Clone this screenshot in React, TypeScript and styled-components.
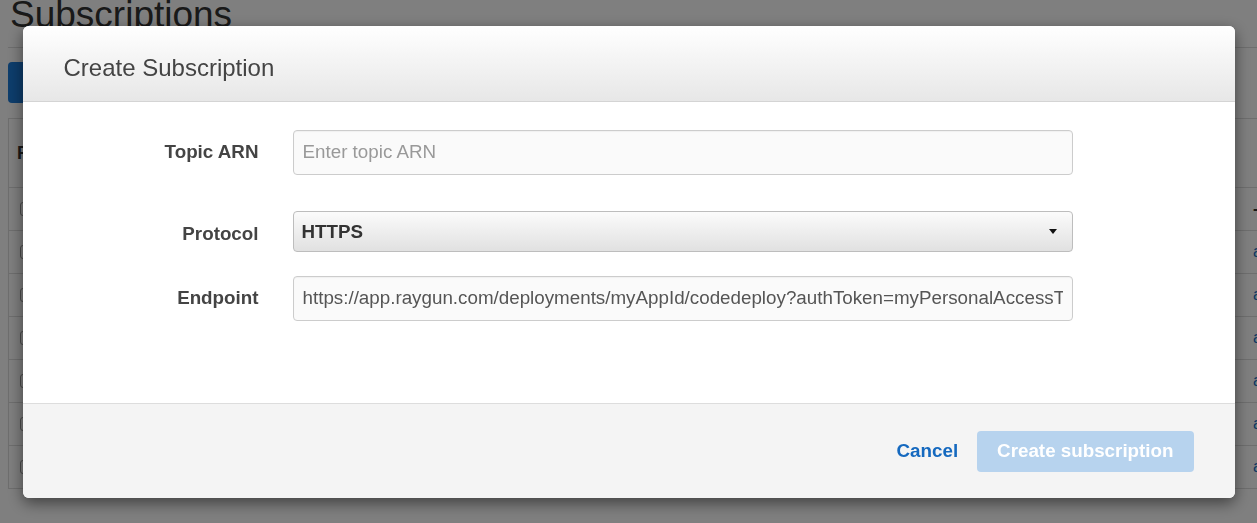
import styled, { createGlobalStyle } from 'styled-components'

const rows = ['-', 'arn', 'arn', 'arn', 'arn', 'arn', 'arn']

export default function App() {
  return (
    <>
      <GlobalStyle />
      <Page aria-hidden="true">
        <PageTitle>Subscriptions</PageTitle>
        <Rule />
        <ToolbarButton>Create subscription</ToolbarButton>
        <Table>
          <HeadRow>
            <HeadCell>Filter</HeadCell>
            <HeadCell />
          </HeadRow>
          {rows.map((value, i) => (
            <BodyRow key={i}>
              <Cell>
                <Check />
              </Cell>
              <Cell>{value === '-' ? <Dash>-</Dash> : <TableLink>arn:aws:sns</TableLink>}</Cell>
            </BodyRow>
          ))}
        </Table>
      </Page>

      <Overlay>
        <Modal role="dialog" aria-labelledby="create-subscription-title">
          <ModalHeader>
            <ModalTitle id="create-subscription-title">Create Subscription</ModalTitle>
          </ModalHeader>

          <ModalBody>
            <Field $top={28}>
              <Label htmlFor="topic-arn">Topic ARN</Label>
              <TextInput id="topic-arn" placeholder="Enter topic ARN" />
            </Field>

            <Field $top={36}>
              <Label htmlFor="protocol" $shift={3}>
                Protocol
              </Label>
              <SelectWrap>
                <Select id="protocol" defaultValue="HTTPS">
                  <option>HTTP</option>
                  <option>HTTPS</option>
                  <option>Email</option>
                  <option>SMS</option>
                </Select>
                <Caret viewBox="0 0 8 5" aria-hidden="true">
                  <path d="M0 0h8L4 5z" />
                </Caret>
              </SelectWrap>
            </Field>

            <Field $top={24}>
              <Label htmlFor="endpoint">Endpoint</Label>
              <TextInput
                id="endpoint"
                defaultValue="https://app.raygun.com/deployments/myAppId/codedeploy?authToken=myPersonalAccessToken"
              />
            </Field>
          </ModalBody>

          <ModalFooter>
            <CancelLink href="#">Cancel</CancelLink>
            <PrimaryButton disabled>Create subscription</PrimaryButton>
          </ModalFooter>
        </Modal>
      </Overlay>
    </>
  )
}

const GlobalStyle = createGlobalStyle`
  html,
  body {
    margin: 0;
    padding: 0;
  }

  body {
    font-family: "Liberation Sans", Arial, Helvetica, sans-serif;
    background: #fff;
    color: #333;
    overflow: hidden;
  }

  *,
  *::before,
  *::after {
    box-sizing: border-box;
  }
`

/* page behind the dialog */

const Page = styled.div`
  width: 1257px;
  height: 523px;
  overflow: hidden;
  padding-left: 8px;
`

const PageTitle = styled.h1`
  margin: -3px 0 0 2px;
  font-size: 37px;
  line-height: 36px;
  font-weight: 400;
  color: #333;
`

const Rule = styled.div`
  margin-top: 14px;
  border-top: 1px solid #ddd;
`

const ToolbarButton = styled.button`
  display: block;
  margin-top: 14px;
  width: 160px;
  height: 41px;
  border: 0;
  border-radius: 4px;
  background: #1b7bd9;
  color: #fff;
  font: 700 18px "Liberation Sans", Arial, sans-serif;
`

const Table = styled.div`
  margin-top: 15px;
  width: 1400px;
  border: 1px solid #ddd;
  border-right: 0;
  border-bottom: 0;
  background: #fff;
`

const HeadRow = styled.div`
  display: grid;
  grid-template-columns: 1236px 1fr;
  align-items: center;
  height: 69px;
  border-bottom: 1px solid #ddd;
`

const BodyRow = styled.div`
  display: grid;
  grid-template-columns: 1236px 1fr;
  align-items: center;
  height: 43px;
  border-bottom: 1px solid #ddd;
`

const HeadCell = styled.div`
  padding: 0 8px;
  font-size: 18px;
  font-weight: 700;
  color: #333;
  white-space: nowrap;
`

const Cell = styled.div`
  padding: 0 8px 0 11px;
  font-size: 16px;
  white-space: nowrap;
`

const Check = styled.span`
  display: block;
  width: 14px;
  height: 14px;
  border: 1px solid #999;
  border-radius: 3px;
  background: #fff;
`

const Dash = styled.span`
  margin-left: -3px;
  font-weight: 700;
  color: #333;
`

const TableLink = styled.span`
  margin-left: -3px;
  color: #1a6fc4;
`

/* dialog */

const Overlay = styled.div`
  position: fixed;
  inset: 0;
  display: flex;
  align-items: center;
  justify-content: center;
  background: rgba(0, 0, 0, 0.5);
`

const Modal = styled.section`
  width: 1212px;
  border-radius: 6px;
  overflow: hidden;
  background: #fff;
  box-shadow: 0 5px 15px rgba(0, 0, 0, 0.5);
`

const ModalHeader = styled.header`
  height: 76px;
  padding: 27px 41px 0;
  border-bottom: 1px solid #d4d4d4;
  background: linear-gradient(to bottom, #ffffff 0%, #e7e7e7 100%);
`

const ModalTitle = styled.h2`
  margin: 0;
  font-size: 24px;
  line-height: 29px;
  font-weight: 400;
  color: #444;
`

const ModalBody = styled.div`
  height: 301px;
  display: flex;
  flex-direction: column;
`

const Field = styled.div<{ $top: number }>`
  display: grid;
  grid-template-columns: 236px 780px;
  column-gap: 34px;
  align-items: center;
  margin-top: ${(p) => p.$top}px;
`

const Label = styled.label<{ $shift?: number }>`
  padding-top: ${(p) => (p.$shift ?? 0) * 2}px;
  text-align: right;
  font-size: 18.8px;
  font-weight: 700;
  color: #444;
`

const TextInput = styled.input`
  width: 100%;
  height: 45px;
  padding: 0 9px;
  border: 1px solid #ccc;
  border-radius: 4px;
  background: #fafafa;
  box-shadow: inset 0 1px 1px rgba(0, 0, 0, 0.04);
  font: 400 18.8px "Liberation Sans", Arial, sans-serif;
  color: #555;
  outline: none;

  &::placeholder {
    color: #999;
  }
`

const SelectWrap = styled.div`
  position: relative;
`

const Select = styled.select`
  appearance: none;
  width: 100%;
  height: 41px;
  padding: 0 30px 0 8px;
  border: 1px solid #bdbdbd;
  border-radius: 4px;
  background: linear-gradient(to bottom, #fbfbfb 0%, #e1e1e1 100%);
  font: 700 18.8px "Liberation Sans", Arial, sans-serif;
  color: #333;
  outline: none;
`

const Caret = styled.svg`
  position: absolute;
  top: 18px;
  right: 16px;
  width: 8px;
  height: 5px;
  fill: #111;
  pointer-events: none;
`

const ModalFooter = styled.footer`
  height: 95px;
  display: flex;
  align-items: center;
  justify-content: flex-end;
  gap: 19px;
  padding: 1px 41px 0;
  border-top: 1px solid #ddd;
  background: #f4f4f4;
`

const CancelLink = styled.a`
  font-size: 18.8px;
  font-weight: 700;
  color: #1569bf;
  text-decoration: none;
`

const PrimaryButton = styled.button`
  height: 41px;
  padding: 0 20px;
  border: 0;
  border-radius: 4px;
  background: #b7d3ee;
  color: #fff;
  font: 700 18.8px "Liberation Sans", Arial, sans-serif;
  cursor: not-allowed;
`
